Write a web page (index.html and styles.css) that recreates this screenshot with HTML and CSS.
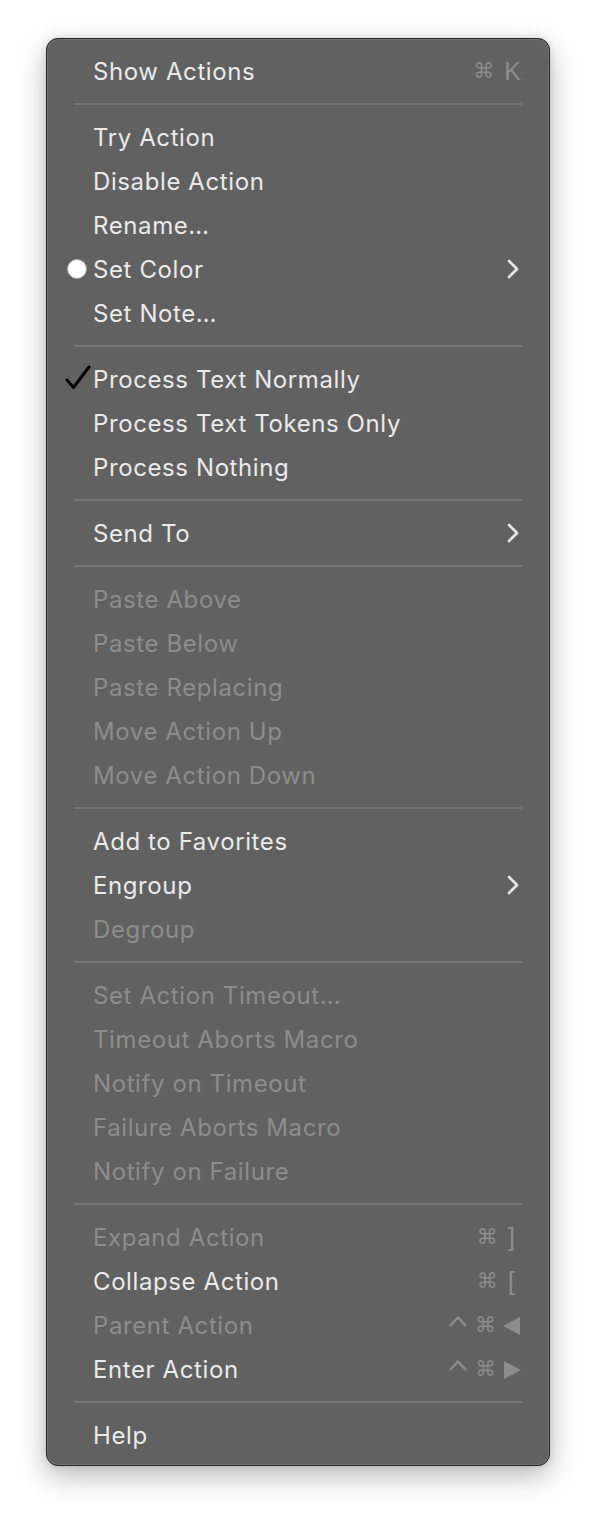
FILE: index.html
```html
<!DOCTYPE html>
<html>
<head>
<meta charset="utf-8">
<link rel="stylesheet" href="styles.css">
</head>
<body>
<div class="menu">
  <div class="row"><span class="gutter"></span><span class="label">Show Actions</span><span class="key"><span class="cmd">⌘</span><span class="ch">K</span></span></div>
  <div class="sep"></div>
  <div class="row"><span class="gutter"></span><span class="label">Try Action</span></div>
  <div class="row"><span class="gutter"></span><span class="label">Disable Action</span></div>
  <div class="row"><span class="gutter"></span><span class="label">Rename…</span></div>
  <div class="row"><span class="gutter"><span class="dot"></span></span><span class="label">Set Color</span><svg class="chev" width="12" height="20" viewBox="0 0 12 20"><path d="M2 2 L10 10 L2 18" fill="none" stroke="#e6e6e6" stroke-width="2.6" stroke-linecap="round" stroke-linejoin="round"/></svg></div>
  <div class="row"><span class="gutter"></span><span class="label">Set Note…</span></div>
  <div class="sep"></div>
  <div class="row"><span class="gutter"><svg class="check" width="26" height="26" viewBox="0 0 26 26"><path d="M2 15 L8.5 22.5 L24 2" fill="none" stroke="#000" stroke-width="3" stroke-linecap="round" stroke-linejoin="round"/></svg></span><span class="label">Process Text Normally</span></div>
  <div class="row"><span class="gutter"></span><span class="label">Process Text Tokens Only</span></div>
  <div class="row"><span class="gutter"></span><span class="label">Process Nothing</span></div>
  <div class="sep"></div>
  <div class="row"><span class="gutter"></span><span class="label">Send To</span><svg class="chev" width="12" height="20" viewBox="0 0 12 20"><path d="M2 2 L10 10 L2 18" fill="none" stroke="#e6e6e6" stroke-width="2.6" stroke-linecap="round" stroke-linejoin="round"/></svg></div>
  <div class="sep"></div>
  <div class="row off"><span class="gutter"></span><span class="label">Paste Above</span></div>
  <div class="row off"><span class="gutter"></span><span class="label">Paste Below</span></div>
  <div class="row off"><span class="gutter"></span><span class="label">Paste Replacing</span></div>
  <div class="row off"><span class="gutter"></span><span class="label">Move Action Up</span></div>
  <div class="row off"><span class="gutter"></span><span class="label">Move Action Down</span></div>
  <div class="sep"></div>
  <div class="row"><span class="gutter"></span><span class="label">Add to Favorites</span></div>
  <div class="row"><span class="gutter"></span><span class="label">Engroup</span><svg class="chev" width="12" height="20" viewBox="0 0 12 20"><path d="M2 2 L10 10 L2 18" fill="none" stroke="#e6e6e6" stroke-width="2.6" stroke-linecap="round" stroke-linejoin="round"/></svg></div>
  <div class="row off"><span class="gutter"></span><span class="label">Degroup</span></div>
  <div class="sep"></div>
  <div class="row off"><span class="gutter"></span><span class="label">Set Action Timeout…</span></div>
  <div class="row off"><span class="gutter"></span><span class="label">Timeout Aborts Macro</span></div>
  <div class="row off"><span class="gutter"></span><span class="label">Notify on Timeout</span></div>
  <div class="row off"><span class="gutter"></span><span class="label">Failure Aborts Macro</span></div>
  <div class="row off"><span class="gutter"></span><span class="label">Notify on Failure</span></div>
  <div class="sep"></div>
  <div class="row off"><span class="gutter"></span><span class="label">Expand Action</span><span class="key"><span class="cmd">⌘</span><span class="ch br">]</span></span></div>
  <div class="row"><span class="gutter"></span><span class="label">Collapse Action</span><span class="key"><span class="cmd">⌘</span><span class="ch br">[</span></span></div>
  <div class="row off"><span class="gutter"></span><span class="label">Parent Action</span><span class="key"><svg class="ctrl" width="18" height="12" viewBox="0 0 18 12"><path d="M1.5 10.5 L9 2.5 L16.5 10.5" fill="none" stroke="#8d8d8d" stroke-width="2.4" stroke-linecap="round" stroke-linejoin="round"/></svg><span class="cmd">⌘</span><svg class="tri" width="18" height="18" viewBox="0 0 18 18"><polygon points="17,0 17,18 0,9" fill="#8d8d8d"/></svg></span></div>
  <div class="row"><span class="gutter"></span><span class="label">Enter Action</span><span class="key"><svg class="ctrl" width="18" height="12" viewBox="0 0 18 12"><path d="M1.5 10.5 L9 2.5 L16.5 10.5" fill="none" stroke="#8d8d8d" stroke-width="2.4" stroke-linecap="round" stroke-linejoin="round"/></svg><span class="cmd">⌘</span><svg class="tri" width="18" height="18" viewBox="0 0 18 18"><polygon points="1,0 1,18 18,9" fill="#8d8d8d"/></svg></span></div>
  <div class="sep"></div>
  <div class="row"><span class="gutter"></span><span class="label">Help</span></div>
</div>
</body>
</html>
```
FILE: styles.css
```css
html, body {
  margin: 0;
  padding: 0;
  background: #ffffff;
}
body {
  padding: 38px 0 54px 46px;
  font-family: Inter, "Liberation Sans", sans-serif;
}
.menu {
  box-sizing: border-box;
  width: 504px;
  padding: 10px 0 8px 0;
  background: #616161;
  border: 1px solid #262626;
  border-radius: 12px;
  box-shadow: inset 0 0 0 1px #727272, 0 10px 28px rgba(0, 0, 0, 0.28), 0 0 6px rgba(0, 0, 0, 0.12);
}
.row {
  height: 44px;
  display: flex;
  align-items: center;
  padding-right: 28px;
  color: #eaeaea;
  font-size: 24px;
  letter-spacing: 0.6px;
}
.row.off {
  color: #8d8d8d;
}
.gutter {
  width: 46px;
  flex: none;
  display: flex;
  justify-content: flex-end;
  align-items: center;
  height: 44px;
}
.label {
  flex: 1;
  white-space: nowrap;
}
.key {
  display: flex;
  align-items: center;
  gap: 8px;
  color: #8d8d8d;
  letter-spacing: 0;
  white-space: nowrap;
}
.cmd {
  font-family: "DejaVu Sans", sans-serif;
  font-size: 21px;
  line-height: 1;
}
.ch {
  font-family: "Liberation Sans", sans-serif;
  font-size: 25px;
  line-height: 1;
  margin-left: 2px;
}
.ch.br {
  font-size: 26px;
  margin-right: 6px;
}
.ctrl {
  margin-top: -8px;
}
.tri {
  margin-top: 2px;
  margin-left: -1px;
}
.chev {
  flex: none;
  margin-right: 2px;
}
.dot {
  width: 18px;
  height: 18px;
  border-radius: 50%;
  background: #ffffff;
  border: 1px solid #a8a8a8;
  margin-right: 6px;
}
.check {
  margin-right: 2px;
  margin-top: -2px;
}
.sep {
  height: 22px;
  display: flex;
  align-items: center;
  padding: 0 27px;
}
.sep::before {
  content: "";
  display: block;
  flex: 1;
  height: 2px;
  background: #767676;
}
```
